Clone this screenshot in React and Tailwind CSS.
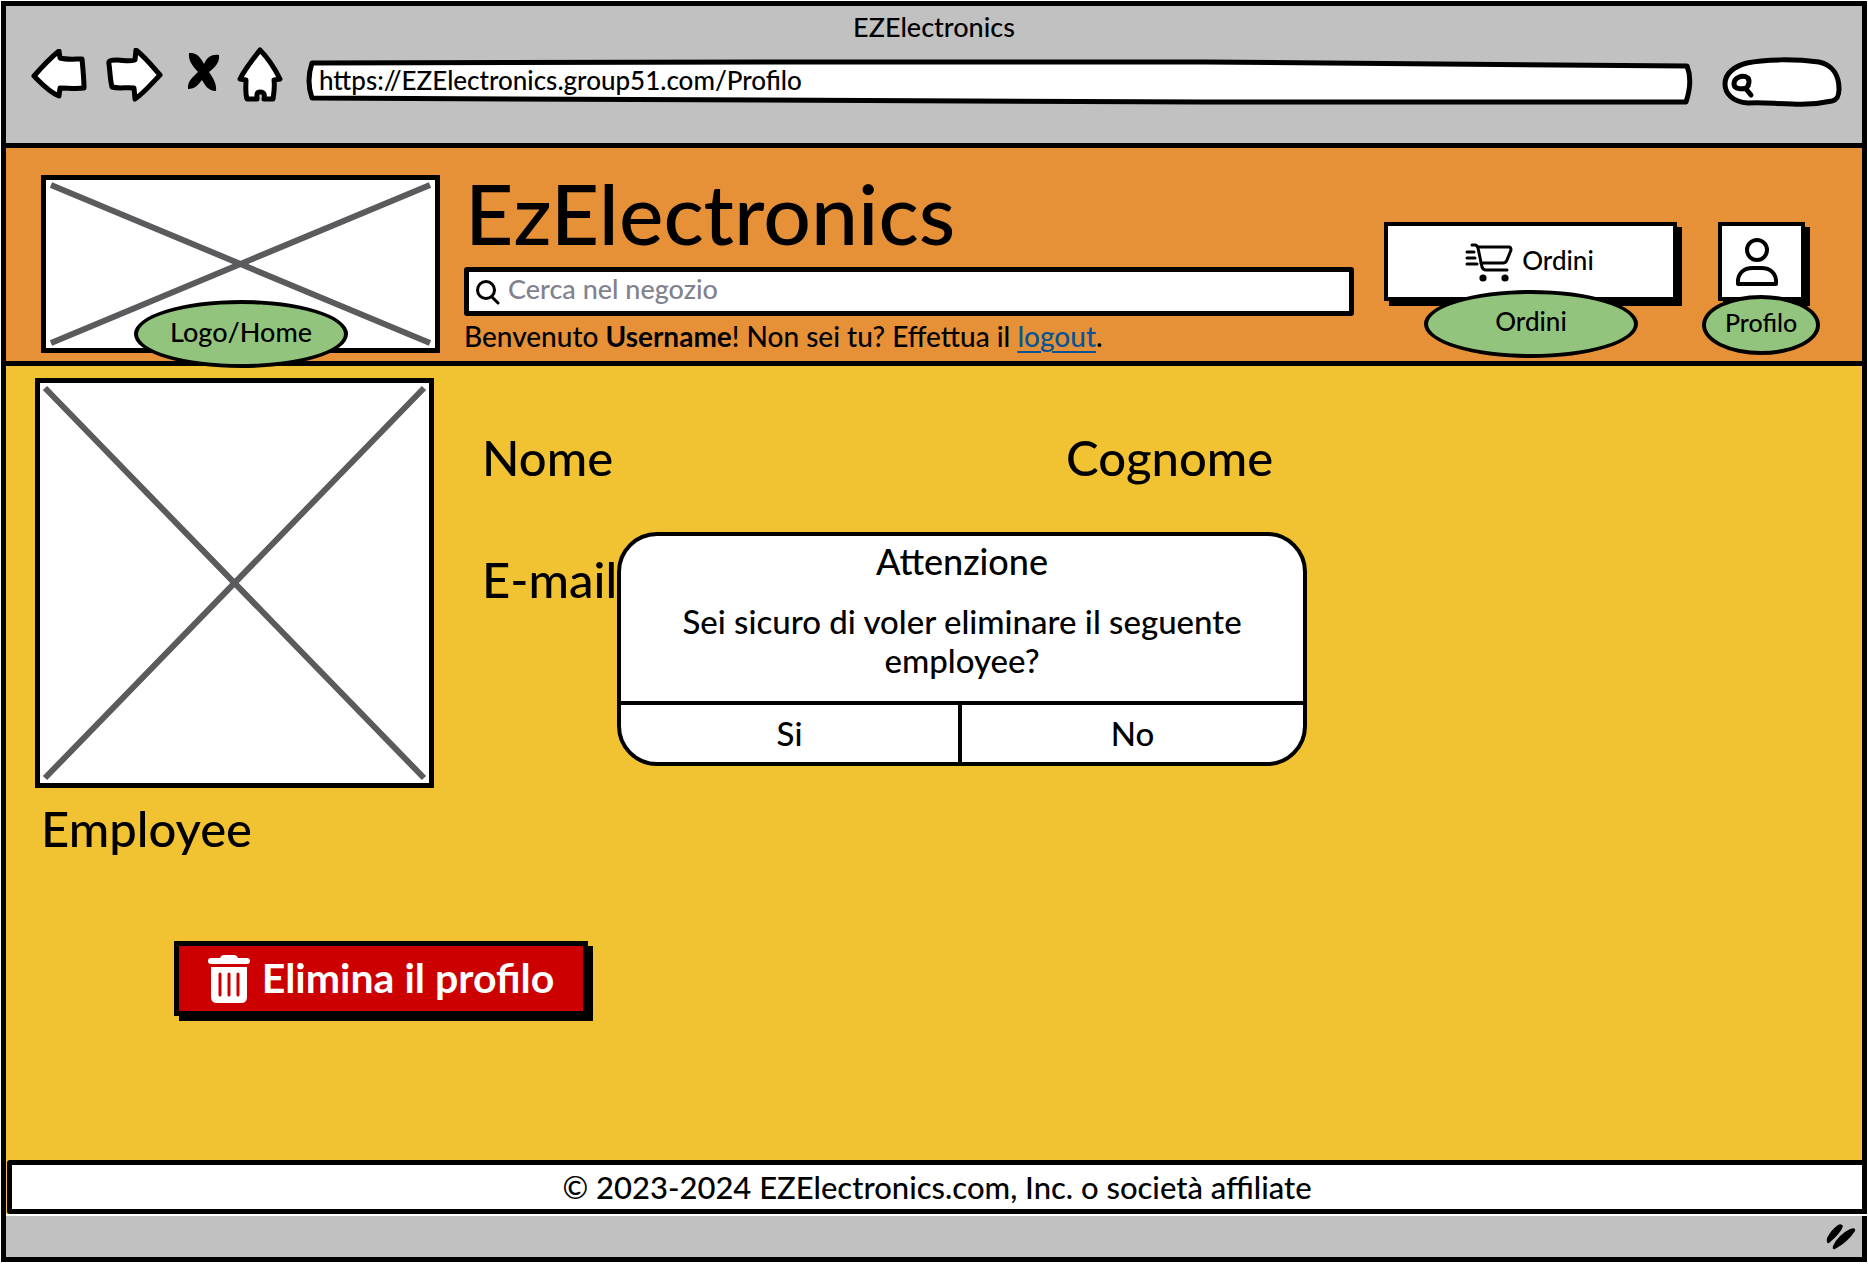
import React from "react";

const outline = {
  fill: "#fff",
  stroke: "#000",
  strokeLinejoin: "round",
  strokeLinecap: "round",
};

function BackIcon() {
  return (
    <svg className="h-[52px] w-[56px]" viewBox="0 0 56 52" {...outline} strokeWidth={5}>
      <path d="M3 27 C10 19 18 10 28 2 L29 9 C36 11 44 10 51 10 C52 20 53 30 53 39 C45 40 37 39 29 39 L28 47 C18 43 10 34 3 27 Z" />
    </svg>
  );
}

function ForwardIcon() {
  return (
    <svg className="h-[54px] w-[58px]" viewBox="0 0 58 54" {...outline} strokeWidth={5}>
      <path d="M4 16 C3 12 7 12 12 12 C18 12 24 14 30 12 L31 2 C40 9 48 19 55 27 C47 35 39 45 30 51 L29 40 C21 39 14 41 7 39 C5 31 5 23 4 16 Z" />
    </svg>
  );
}

function StopIcon() {
  return (
    <svg className="h-[40px] w-[33px]" viewBox="0 0 33 40" fill="#000">
      <path d="M2 1 C10 0 14 6 17 12 C20 5 25 2 32 3 C33 11 27 16 22 20 C26 26 30 32 29 39 C21 39 18 33 15 28 C11 33 8 37 1 37 C0 29 6 25 11 20 C6 14 1 9 2 1 Z" />
    </svg>
  );
}

function HomeIcon() {
  return (
    <svg className="h-[56px] w-[46px]" viewBox="0 0 46 56" {...outline} strokeWidth={5}>
      <path d="M23 3 C31 11 38 22 43 32 L37 33 C38 40 37 46 36 52 L27 52 C28 47 27 45 23 45 C19 45 20 48 20 52 L10 52 C8 46 9 40 9 33 L3 32 C8 22 16 12 23 3 Z" />
    </svg>
  );
}

function CartIcon() {
  return (
    <svg className="h-[40px] w-[48px] shrink-0" viewBox="0 0 48 40" fill="none" stroke="#000" strokeWidth="3" strokeLinecap="round" strokeLinejoin="round">
      <path d="M7 3 H10 Q12 3 13 6 L17 25 Q18 28 21 28 H42" />
      <path d="M13 5 H44 Q46 5 46 8 L42 18 Q41 21 38 21 H16" />
      <path d="M2 10 H9 M2 16 H10 M2 22 H12" />
      <circle cx="18" cy="36" r="3.6" fill="#000" stroke="none" />
      <circle cx="40" cy="36" r="3.6" fill="#000" stroke="none" />
    </svg>
  );
}

function PersonIcon() {
  return (
    <svg className="h-[50px] w-[44px]" viewBox="0 0 44 50" fill="none" stroke="#000" strokeWidth="4" strokeLinejoin="round">
      <circle cx="22" cy="13" r="10" />
      <path d="M3 47 C2 36 9 31 18 31 H26 C35 31 42 36 41 47 Z" />
    </svg>
  );
}

function TrashIcon() {
  return (
    <svg className="h-[50px] w-[42px] shrink-0" viewBox="0 0 42 50" fill="#fff">
      <path d="M3 4 H12 Q13 1 16 1 H26 Q29 1 30 4 H39 Q42 4 42 7 Q42 10 39 10 H3 Q0 10 0 7 Q0 4 3 4 Z" />
      <path d="M3 13 H39 V43 Q39 49 33 49 H9 Q3 49 3 43 Z" />
      <path d="M12 20 V41 M21 20 V41 M30 20 V41" stroke="#c00" strokeWidth="3" strokeLinecap="round" />
    </svg>
  );
}

function Placeholder({ className }) {
  return (
    <div className={"border-[5px] border-black bg-white p-[5px] " + className}>
      <svg className="block h-full w-full overflow-visible" viewBox="0 0 100 100" preserveAspectRatio="none" stroke="#5b5b5d" strokeWidth="6">
        <path d="M0 0 L100 100 M100 0 L0 100" vectorEffect="non-scaling-stroke" />
      </svg>
    </div>
  );
}

function Tag({ className, children }) {
  return (
    <a href="#" className={"absolute flex items-center justify-center rounded-[50%] border-4 border-black bg-[#93c47d] pb-[6px] leading-none " + className}>
      {children}
    </a>
  );
}

export default function App() {
  return (
    <div className="flex min-h-screen flex-col bg-white px-px pt-px pb-[2px] font-['Lato',sans-serif] font-medium text-black">
      <div className="flex grow flex-col border-[5px] border-black bg-[#f1c232]">
        <div className="flex flex-col border-b-[5px] border-black bg-[#c1c1c1] pb-[36px]">
          <div className="pt-[6px] text-center text-[27px] leading-[30px]">EZElectronics</div>
          <div className="flex items-center pr-[20px] pl-[25px]">
            <button aria-label="Indietro"><BackIcon /></button>
            <button aria-label="Avanti" className="ml-[18px]"><ForwardIcon /></button>
            <button aria-label="Ferma" className="ml-[24px] -mt-[6px]"><StopIcon /></button>
            <button aria-label="Home" className="ml-[17px]"><HomeIcon /></button>
            <div className="relative ml-[23px] mt-[15px] h-[46px] grow">
              <svg className="absolute inset-0 h-full w-full overflow-visible" viewBox="0 0 1388 46" preserveAspectRatio="none" {...outline} strokeWidth={5}>
                <path vectorEffect="non-scaling-stroke" d="M6 4 L500 3 L900 3 L1384 7 Q1390 22 1383 43 L900 43 L6 39 Q0 22 6 4 Z" />
              </svg>
              <input aria-label="Indirizzo" defaultValue="https://EZElectronics.group51.com/Profilo" className="relative block h-[42px] w-full bg-transparent pr-4 pl-[13px] text-[26px] leading-none outline-none" />
            </div>
            <div className="relative ml-[31px] mt-[15px] h-[50px] w-[120px] shrink-0">
              <svg className="absolute inset-0 h-full w-full" viewBox="0 0 120 50" {...outline} strokeWidth={5}>
                <path d="M26 46 C10 45 3 36 3 27 C3 16 13 9 25 6 C42 2 74 2 97 5 C111 8 117 19 117 32 C117 41 114 43 110 44 C96 47 84 48 70 47 C54 47 43 45 26 46 Z" />
                <path fill="none" d="M26 21 C20 17 12 21 12 27 C12 33 24 33 26 29 C27 26 28 24 26 21 Z M24 32 L29 38" />
              </svg>
              <input aria-label="Cerca" className="relative h-full w-full bg-transparent pl-[36px] outline-none" />
            </div>
          </div>
        </div>

        <header className="relative z-10 flex h-[218px] shrink-0 border-b-[5px] border-black bg-[#e69138] pl-[35px]">
          <div className="relative mt-[27px] h-[178px] w-[399px] shrink-0">
            <Placeholder className="h-full w-full" />
            <Tag className="top-[125px] left-[93px] h-[68px] w-[214px] text-[27px]">Logo/Home</Tag>
          </div>
          <div className="ml-[24px] min-w-0 grow">
            <h1 className="mt-[15px] ml-px mb-[4px] h-[100px] text-[84px] leading-[100px]">EzElectronics</h1>
            <label className="flex h-[49px] items-center rounded-[3px] border-[5px] border-black bg-white px-[7px]">
              <svg className="h-[26px] w-[24px]" viewBox="0 0 24 26" fill="none" stroke="#000" strokeWidth="3" strokeLinecap="round">
                <circle cx="10" cy="11" r="8.5" />
                <path d="M16 18 L22 24" />
              </svg>
              <input aria-label="Cerca nel negozio" placeholder="Cerca nel negozio" className="ml-[8px] h-full grow bg-transparent pb-[6px] text-[27px] outline-none placeholder:text-[#82828e]" />
            </label>
            <p className="mt-[4px] whitespace-nowrap text-[28px] leading-[32px]">
              Benvenuto <b>Username</b>! Non sei tu? Effettua il{" "}
              <a href="#" className="text-[#0b5394] underline decoration-2 underline-offset-4">logout</a>.
            </p>
          </div>
          <div className="relative mt-[74px] ml-[30px] h-[79px] w-[293px] shrink-0">
            <button className="flex h-full w-full items-center justify-center gap-[9px] border-4 border-black bg-white pr-[2px] text-[26px] shadow-[5px_5px_0_#000]">
              <CartIcon />
              <span className="pb-[3px]">Ordini</span>
            </button>
            <Tag className="top-[68px] left-[40px] h-[68px] w-[214px] text-[26px]">Ordini</Tag>
          </div>
          <div className="relative mt-[74px] mr-[57px] ml-[41px] h-[79px] w-[87px] shrink-0">
            <button aria-label="Profilo" className="flex h-full w-full items-center justify-center border-4 border-black bg-white pt-px pr-[9px] shadow-[5px_5px_0_#000]">
              <PersonIcon />
            </button>
            <Tag className="-left-[16px] top-[73px] h-[60px] w-[118px] text-[25px]">Profilo</Tag>
          </div>
        </header>

        <main className="relative flex grow pl-[29px]">
          <section className="w-[399px] shrink-0 pt-[12px]">
            <Placeholder className="h-[410px] w-full" />
            <h2 className="mt-[11px] ml-[6px] text-[49px] leading-[58px]">Employee</h2>
            <button className="mt-[84px] ml-[139px] flex h-[75px] w-[414px] items-center justify-center gap-[12px] border-[5px] border-black bg-[#c00] text-[41px] leading-none font-bold whitespace-nowrap text-white shadow-[5px_5px_0_#000]">
              <TrashIcon />
              <span className="pb-[3px]">Elimina il profilo</span>
            </button>
          </section>
          <dl className="ml-[48px] grid h-[244px] grow grid-cols-[584px_1fr] content-start gap-y-[64px] pt-[62px] text-[49px] leading-[58px]">
            <dt>Nome</dt>
            <dt>Cognome</dt>
            <dt>E-mail</dt>
          </dl>
          <div role="dialog" aria-labelledby="dialog-title" className="absolute top-[166px] left-[611px] flex h-[234px] w-[690px] flex-col overflow-hidden rounded-[40px] border-4 border-black bg-white text-center">
            <h3 id="dialog-title" className="pt-[5px] text-[36px] leading-[40px]">Attenzione</h3>
            <p className="mt-[21px] grow px-[40px] text-[33px] leading-[39px]">Sei sicuro di voler eliminare il seguente employee?</p>
            <div className="grid h-[61px] grid-cols-2 border-t-4 border-black text-[33px] leading-none">
              <button className="border-r-4 border-black">Si</button>
              <button>No</button>
            </div>
          </div>
        </main>

        <footer className="-mr-[5px] border-b-2 border-white">
          <div className="ml-px rounded-[3px] border-[5px] border-black bg-white text-center text-[31px] leading-[44px]">
            © 2023-2024 EZElectronics.com, Inc. o società affiliate
          </div>
        </footer>
        <div className="flex h-[41px] items-center justify-end bg-[#c1c1c1] pr-[6px]">
          <svg className="h-[26px] w-[30px]" viewBox="0 0 30 26" fill="#000">
            <path d="M1 14 Q5 6 12 1 Q15 -1 17 2 Q15 9 3 19 Q0 20 1 14 Z" />
            <path d="M7 22 Q12 11 24 5 Q30 3 29 7 Q22 18 9 25 Q6 26 7 22 Z" />
          </svg>
        </div>
      </div>
    </div>
  );
}
